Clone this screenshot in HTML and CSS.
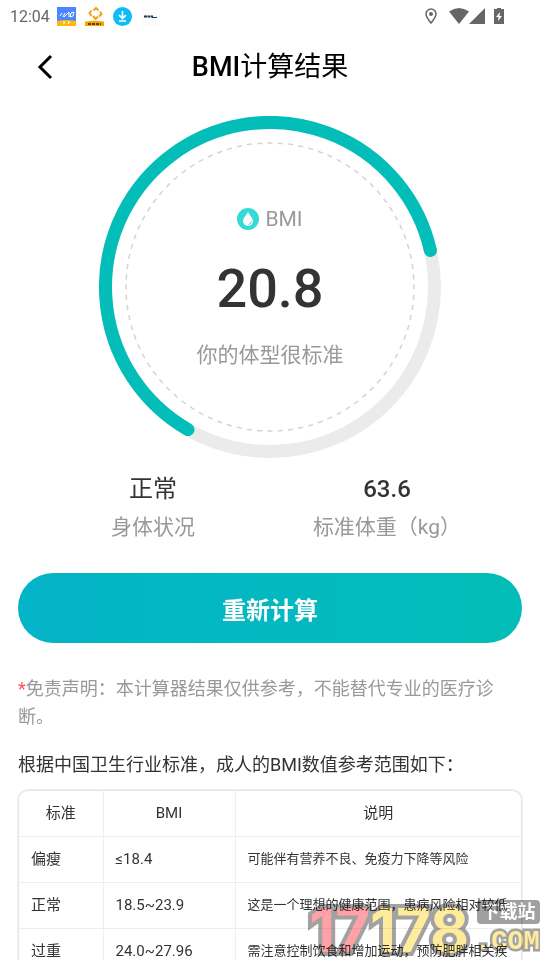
FILE: index.html
```html
<!DOCTYPE html>
<html lang="zh-CN">
<head>
<meta charset="utf-8">
<meta name="viewport" content="width=device-width, initial-scale=1">
<title>BMI计算结果</title>
<link rel="stylesheet" href="styles.css">
</head>
<body>
<div class="status">
  <time class="clock">12:04</time>
  <div class="apps">
    <svg width="19" height="19" viewBox="0 0 19 19"><path fill="#4b86fa" d="M0 0h19v15H0z"/><path fill="#fdb813" d="M0 14q9.500-2 19 0v5H0z"/><path d="M3 9l2-3M6 10l2-4M7 10l5-5v5M13 10l1-4 3-1-1 4-3 1M7 17v-2M11.500 17v-2M6 15h2M11 15h2" fill="none" stroke="#fff"/></svg>
    <svg width="19" height="19" viewBox="0 0 19 19"><path fill="none" stroke="#f5a020" stroke-width="2" d="M8.500 3.500L11 1l2.500 2.500M6.500 3.500L4.500 6l2 3M15 4.500L16.500 7 14 9.500M8 9l2.500 3L13 9.500"/><path fill="#f5a800" d="M0 14.500q9.500-1.500 19 0V19H0z"/><path stroke="#5c4210" stroke-width="2" stroke-dasharray="3 1" d="M3 17h13"/></svg>
    <svg width="19" height="19" viewBox="0 0 19 19"><circle cx="9.500" cy="9.500" r="9.500" fill="#0cbdf5"/><path d="M9.500 4v7M6 8l3.500 3.500L13 8M6 14h7" fill="none" stroke="#fff" stroke-width="1.700"/></svg>
    <svg width="19" height="19" viewBox="0 0 19 19"><path fill="#fcfcfc" d="M0 0h19v19H0z"/><path stroke="#1d3557" stroke-width="2" stroke-dasharray="3 .5" d="M3 9.500h9"/><path stroke="#1d3557" d="M11 10.500h5"/></svg>
  </div>
  <div class="signals">
    <svg width="12" height="16" viewBox="0 0 12 16"><path d="M6 1a5 5 0 0 0-5 5c0 3 3 6.500 5 9 2-2.500 5-6 5-9a5 5 0 0 0-5-5z" fill="none" stroke="#666" stroke-width="1.500"/><circle cx="6" cy="6" r="2" fill="#666"/></svg>
    <svg class="wifi" width="20" height="16" viewBox="0 0 20 16"><path d="M0 3.500Q10-3.500 20 3.500L10 16z" fill="#666"/></svg>
    <svg width="16" height="16" viewBox="0 0 16 16"><path d="M16 0v16H0z" fill="#666"/></svg>
    <svg class="battery" width="10" height="16" viewBox="0 0 10 16"><path d="M3 0h4v1h3v15H0V1h3z" fill="#666"/><path d="M6 4L2 9h2.500L4 13l4-5H5.500z" fill="#fff"/></svg>
  </div>
</div>
<header class="bar">
  <button class="back" type="button" aria-label="返回"><svg width="16" height="26" viewBox="0 0 16 26"><path d="M14 2L3 13l11 11" fill="none" stroke="#000" stroke-width="3"/></svg></button>
  <h1><b>BMI</b>计算结果</h1>
</header>
<main>
  <section class="gauge">
    <svg class="ring" viewBox="0 0 342 342"><circle cx="171" cy="171" r="164.500" fill="none" stroke="#ebebeb" stroke-width="13"/><circle cx="171" cy="171" r="144" fill="none" stroke="#d4d4d4" stroke-width="1.500" pathLength="880" stroke-dasharray="5 5" stroke-dashoffset="2.500"/><path d="M89 313.600A164.500 164.500 0 1 1 331.400 134.500" fill="none" stroke="#03bdb8" stroke-width="13" stroke-linecap="round"/></svg>
    <div class="reading">
      <div class="label"><svg width="22" height="22" viewBox="0 0 22 22"><circle cx="11" cy="11" r="11" fill="#34dad6"/><path d="M11 4C9.500 7 6 10 6 13a5 5 0 0 0 10 0c0-3-3.500-6-5-9z" fill="#fff"/><path d="M11.500 16.500q2.500-.5 3-3" fill="none" stroke="#34dad6"/></svg>BMI</div>
      <div class="value">20.8</div>
      <div class="verdict">你的体型很标准</div>
    </div>
  </section>
  <section class="stats">
    <div><span class="figure">正常</span><span class="caption">身体状况</span></div>
    <div><strong class="figure">63.6</strong><span class="caption">标准体重（kg）</span></div>
  </section>
  <button class="again" type="button">重新计算</button>
  <p class="note"><span class="star">*</span>免责声明：本计算器结果仅供参考，不能替代专业的医疗诊断。</p>
  <p class="intro">根据中国卫生行业标准，成人的BMI数值参考范围如下：</p>
  <div class="sheet">
    <table>
      <thead><tr><th>标准</th><th>BMI</th><th>说明</th></tr></thead>
      <tbody>
        <tr><td>偏瘦</td><td>≤18.4</td><td>可能伴有营养不良、免疫力下降等风险</td></tr>
        <tr><td>正常</td><td>18.5~23.9</td><td>这是一个理想的健康范围，患病风险相对较低</td></tr>
        <tr><td>过重</td><td>24.0~27.96</td><td>需注意控制饮食和增加运动，预防肥胖相关疾</td></tr>
      </tbody>
    </table>
  </div>
</main>
<div class="mark" aria-hidden="true">
  <div class="digits"><span class="red">17</span>178</div>
  <div class="side"><div class="tag">下载站</div><div class="com">.COM</div></div>
</div>
</body>
</html>
```
FILE: styles.css
```css
* { box-sizing: border-box; margin: 0; }
html, body { height: 100%; }
body { position: relative; overflow: hidden; background: #fff; color: #333; font-family: Roboto, "Noto Sans CJK SC", sans-serif; }
svg { display: block; flex: none; }
button { border: 0; font-family: inherit; cursor: pointer; }

.status { display: flex; align-items: center; height: 32px; padding: 0 36px 0 10px; }
.clock { color: #666; font-size: 16px; }
.apps { display: flex; gap: 9px; margin-left: 7px; }
.signals { display: flex; align-items: center; margin-left: auto; height: 28px; }
.wifi { margin-left: 12px; }
.battery { margin-left: 9px; }

.bar { display: grid; grid-template-columns: 72px 1fr 72px; align-items: center; height: 70px; }
.back { justify-self: end; padding: 0; margin-right: 19px; background: none; }
h1 { color: #000; font-size: 27px; font-weight: 400; line-height: 32px; text-align: center; }
h1 b { font-weight: 500; }

main { padding: 14px 18px 0; }
.gauge { display: grid; place-items: center; }
.gauge > * { grid-area: 1 / 1; }
.ring { width: 68%; min-width: 342px; max-width: 342px; }
.reading { display: flex; flex-direction: column; align-items: center; }
.label { display: flex; align-items: center; gap: 6px; color: #999; font-size: 21px; line-height: 28px; }
.value { margin: 24px 0 20px; font-size: 54px; font-weight: 500; line-height: 64px; }
.verdict { color: #999; font-size: 21px; line-height: 28px; }

.stats { display: grid; grid-template-columns: 1fr 1fr; padding: 12px 18px 0; }
.stats div { display: flex; flex-direction: column; align-items: center; }
.figure { font-size: 24px; line-height: 38px; }
strong { font-weight: 500; }
.caption { color: #999; font-size: 21px; line-height: 38px; }

.again { display: block; width: 100%; height: 70px; margin: 27px 0 32px; border-radius: 35px; background: linear-gradient(90deg, #03b4c8, #03bdb8); color: #fff; font-size: 24px; font-weight: 700; }
.note { color: #999; font-size: 18px; line-height: 28px; }
.star { color: #ff5055; }
.intro { margin: 20px 0 11px; font-size: 18px; line-height: 28px; }

.sheet { border: 1px solid #e6e6e6; border-bottom: 0; border-radius: 10px 10px 0 0; box-shadow: 0 0 0 1px #f0f0f0; overflow: hidden; }
table { width: 100%; border-collapse: collapse; table-layout: fixed; }
th, td { height: 46px; padding: 0 12px; border: 1px solid #eee; border-width: 0 1px 1px 0; font-size: 15px; font-weight: 400; line-height: 20px; text-align: left; white-space: nowrap; }
th { height: 45px; text-align: center; }
th:nth-child(1) { width: 84px; }
th:nth-child(2) { width: 132px; }
td:nth-child(3) { font-size: 13px; }
th:last-child, td:last-child { border-right: 0; }

.mark { position: absolute; right: 0; bottom: 0; display: flex; align-items: flex-end; gap: 6px; height: 60px; mix-blend-mode: multiply; font-weight: 700; pointer-events: none; }
.digits { color: #ffeb9c; font-family: Inter, sans-serif; font-size: 60px; line-height: 60px; -webkit-text-stroke: 8px #a2a2a2; paint-order: stroke fill; }
.red { color: #ffa2a8; }
.side { width: 65px; }
.tag { margin-left: 2px; border-radius: 4px; background: #a0a0a0; color: #fff; font-size: 18px; line-height: 24px; text-align: center; }
.com { color: #ffeb9c; font-family: "Liberation Mono", monospace; font-size: 27px; line-height: 36px; -webkit-text-stroke: 5px #a2a2a2; paint-order: stroke fill; }
```
